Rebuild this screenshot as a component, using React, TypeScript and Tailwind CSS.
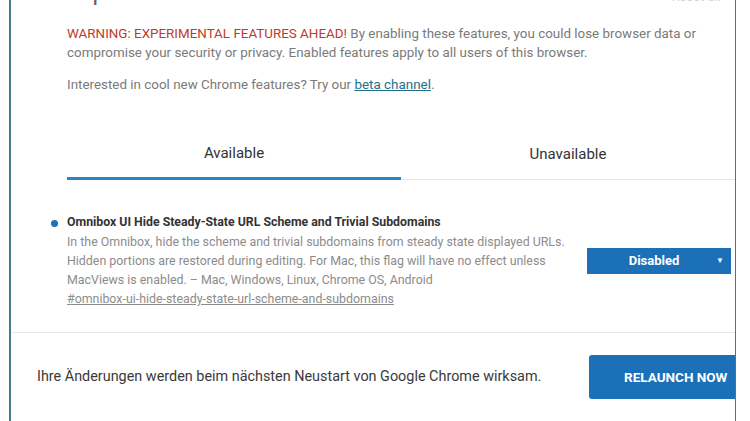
const font = { fontFamily: "Roboto, 'Liberation Sans', sans-serif" };

export default function App() {
  return (
    <div className="w-[750px] h-[421px] bg-white overflow-hidden" style={font}>
      <div className="ml-[9px] w-[727px] h-full border-l-2 border-r border-l-[#3f7c88] border-r-[#6b6b6b] overflow-hidden flex flex-col">
        {/* header (scrolled off) */}
        <div className="-mt-[22px] flex items-end justify-between pl-[56px] pr-[14px] h-[28px]">
          <div className="text-[24px] leading-[28px] text-[#5f6368]">Experiments</div>
          <div className="text-[13px] text-[#d5d5d5]">Reset all</div>
        </div>

        <div className="pl-[56px] pr-[24px] pt-[18px] text-[13.4px] leading-[19px] text-[#7a7a7a]">
          <p>
            <span className="text-[#c0392b]">WARNING: EXPERIMENTAL FEATURES AHEAD!</span> By enabling these
            features, you could lose browser data or compromise your security or privacy. Enabled features apply to
            all users of this browser.
          </p>
          <p className="mt-[13px]">
            Interested in cool new Chrome features? Try our{" "}
            <span className="text-[#1d6f8e] underline">beta channel</span>.
          </p>
        </div>

        {/* tabs */}
        <div className="ml-[56px] mt-[36px] flex">
          <div className="w-[334px] h-[50px] flex items-center justify-center text-[15px] text-[#333] border-b-[3px] border-[#2a86c4]">
            Available
          </div>
          <div className="w-[334px] h-[50px] flex items-center justify-center text-[15px] text-[#333] border-b border-[#e6e6e6]">
            Unavailable
          </div>
        </div>

        {/* experiment row */}
        <div className="mt-[33px] flex items-center pr-[4px]">
          <div className="w-[56px] self-start flex justify-end pr-[9px] pt-[7px]">
            <div className="w-[7px] h-[7px] rounded-full bg-[#1b73b8]" />
          </div>
          <div className="flex-1 text-[12.4px] leading-[19px]">
            <div className="font-bold text-[12.3px] text-[#333]">
              Omnibox UI Hide Steady-State URL Scheme and Trivial Subdomains
            </div>
            <div className="text-[#8c8c8c]">
              In the Omnibox, hide the scheme and trivial subdomains from steady state displayed URLs.
              <br />
              Hidden portions are restored during editing. For Mac, this flag will have no effect unless
              <br />
              MacViews is enabled. – Mac, Windows, Linux, Chrome OS, Android
            </div>
            <div className="text-[#8c8c8c] underline">#omnibox-ui-hide-steady-state-url-scheme-and-subdomains</div>
          </div>
          <div className="w-[144px] h-[26px] bg-[#1b70b8] text-white text-[13px] font-bold flex items-center relative shrink-0">
            <span className="flex-1 text-center pr-[10px]">Disabled</span>
            <span className="absolute right-[7px] text-[8px]">▼</span>
          </div>
        </div>

        {/* bottom bar */}
        <div className="mt-[24px] border-t border-[#e8e8e8] flex items-center justify-between pl-[26px] h-[91px]">
          <div className="text-[14.4px] text-[#3a3a3a]">
            Ihre Änderungen werden beim nächsten Neustart von Google Chrome wirksam.
          </div>
          <div className="w-[160px] -mr-[14px] h-[44px] bg-[#1b70b8] rounded-[3px] text-white text-[13.5px] font-bold flex items-center pl-[35px] shrink-0">
            RELAUNCH NOW
          </div>
        </div>
      </div>
    </div>
  );
}
